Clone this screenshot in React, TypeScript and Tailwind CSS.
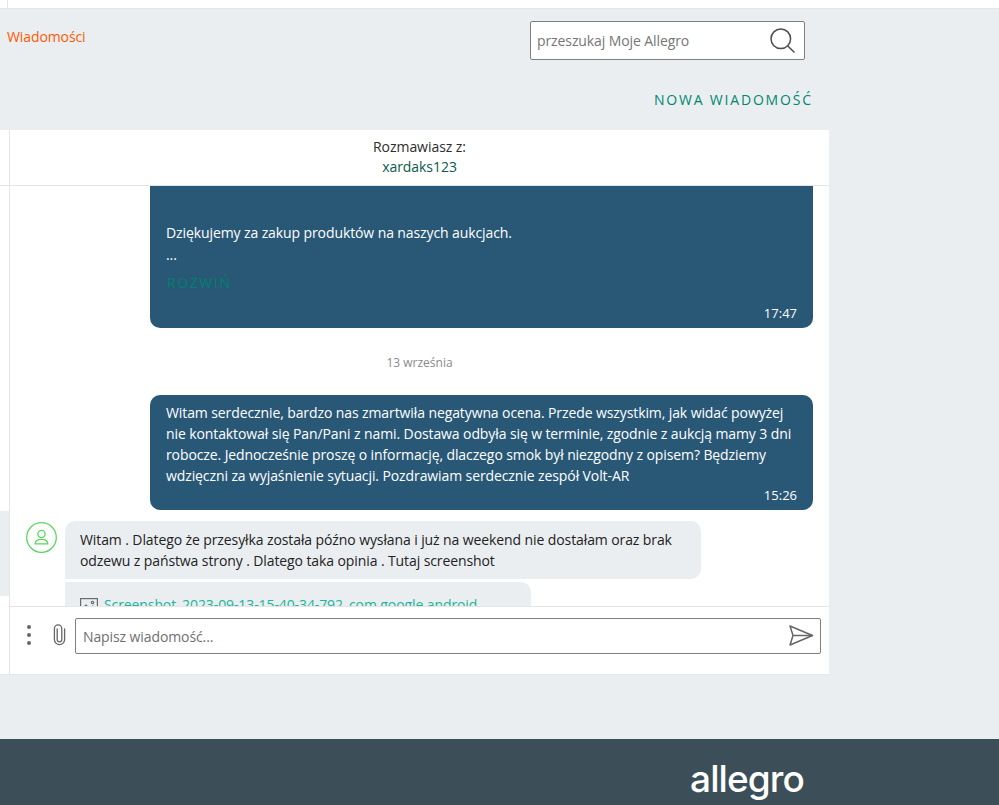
import React from "react";

const FONT = "font-['Open_Sans','Noto_Sans',sans-serif]";

function Bubble({ children, time, clipTop }: { children: React.ReactNode; time: string; clipTop?: boolean }) {
  return (
    <div className={`ml-[150px] mr-[16px] w-[663px] rounded-[10px] bg-[#295877] px-4 text-[14px] leading-[21px] tracking-[-0.1px] whitespace-nowrap text-white ${clipTop ? "-mt-[10px]" : ""}`}>
      {children}
      <div className="flex justify-end pb-[6px] text-[13px] leading-[18px] tracking-normal">{time}</div>
    </div>
  );
}

export default function App() {
  return (
    <div className={`${FONT} flex h-[805px] w-[999px] flex-col overflow-hidden bg-[#ebeef1] text-[#2d2d2d]`}>
      <div className="h-[9px] shrink-0 border-b border-[#e3e5e7] bg-white">
        <div className="h-[8px] w-[8px] border-r border-[#e6e6e6]" />
      </div>

      <div className="relative h-[121px] shrink-0">
        <div className="pl-[7px] pt-[18px] text-[14px] leading-[20px] tracking-[-0.1px] text-[#ff5a00]">Wiadomości</div>
        <div className="absolute left-[530px] top-[12px] flex h-[39px] w-[275px] items-center justify-between rounded-[2px] border border-[#7f7f7f] bg-white pl-[6px] pr-[9px] text-[14px] tracking-[-0.1px] text-[#767676]">
          <span>przeszukaj Moje Allegro</span>
          <svg width="25" height="25" viewBox="0 0 25 25" fill="none" stroke="#4d4d4d" strokeWidth="1.5">
            <circle cx="10.8" cy="10.8" r="9.8" />
            <path d="M17.8 18 L24.5 24.5" />
          </svg>
        </div>
        <div className="absolute left-[654px] top-[81px] text-[14px] leading-[20px] tracking-[1.8px] whitespace-nowrap text-[#00876f]">
          NOWA WIADOMOŚĆ
        </div>
      </div>

      <div className="flex h-[545px] w-[829px] shrink-0 border-b border-[#e4e6e8] bg-white">
        <div className="flex w-[10px] shrink-0 flex-col border-r border-[#e3e5e7]">
          <div className="h-[56px] border-b border-[#e3e5e7]" />
          <div className="h-[325px]" />
          <div className="h-[85px] bg-[#ebeef1]" />
        </div>
        <div className="flex min-w-0 flex-1 flex-col">
          <div className="flex h-[56px] shrink-0 flex-col items-center border-b border-[#e3e5e7] pt-[7px] text-[14px] leading-[20px] tracking-[-0.05px]">
            <span className="text-[#2d2d2d]">Rozmawiasz z:</span>
            <span className="text-[#0b5a4d]">xardaks123</span>
          </div>
          <div className="relative h-[420px] shrink-0 overflow-hidden">
            <div className="absolute inset-x-0 top-0 -ml-[10px] w-[829px]">
              <Bubble time="17:47" clipTop>
                <div className="pt-[46px]">Dziękujemy za zakup produktów na naszych aukcjach.</div>
                <div className="mt-[1px]">...</div>
                <div className="mt-[8px] h-[20px] pl-[1px] text-[14px] leading-[20px] tracking-[1.6px] text-[#00806c]">ROZWIŃ</div>
                <div className="h-[11px]" />
              </Bubble>
              <div className="flex h-[67px] items-center justify-center pl-[10px] pt-[2px] text-[12px] text-[#8a8a8a]">13 września</div>
              <Bubble time="15:26">
                <div className="pt-[7px]">
                  Witam serdecznie, bardzo nas zmartwiła negatywna ocena. Przede wszystkim, jak widać powyżej
                  <br />
                  nie kontaktował się Pan/Pani z nami. Dostawa odbyła się w terminie, zgodnie z aukcją mamy 3 dni
                  <br />
                  robocze. Jednocześnie proszę o informację, dlaczego smok był niezgodny z opisem? Będziemy
                  <br />
                  wdzięczni za wyjaśnienie sytuacji. Pozdrawiam serdecznie zespół Volt-AR
                </div>
              </Bubble>
              <div className="mt-[11px] flex pl-[26px]">
                <svg className="mt-[1px] shrink-0" width="31" height="31" viewBox="0 0 31 31" fill="none" stroke="#5bd65f" strokeWidth="1.3">
                  <circle cx="15.5" cy="15.5" r="14.8" />
                  <circle cx="15.5" cy="12" r="3.6" />
                  <path d="M9.2 21.8 c0.2-3 3-4.4 6.3-4.4 s6.1 1.4 6.3 4.4 Z" />
                </svg>
                <div className="ml-[8px] flex flex-col gap-[3px]">
                  <div className="h-[58px] w-[636px] rounded-[10px] rounded-bl-none bg-[#ebeef1] px-[15px] pt-[8px] text-[14px] leading-[21px] tracking-[-0.1px] whitespace-nowrap text-[#222]">
                    Witam . Dlatego że przesyłka została późno wysłana i już na weekend nie dostałam oraz brak
                    <br />
                    odzewu z państwa strony . Dlatego taka opinia . Tutaj screenshot
                  </div>
                  <div className="flex h-[60px] w-[466px] items-start gap-[6px] rounded-[10px] rounded-tl-none bg-[#ebeef1] px-[15px] pt-[12px] text-[14px] leading-[21px] tracking-[-0.1px] whitespace-nowrap text-[#19b59c]">
                    <svg className="mt-[4px] shrink-0" width="18" height="15" viewBox="0 0 18 15" fill="none" stroke="#6b6b6b" strokeWidth="1.2">
                      <rect x="0.6" y="0.6" width="16.8" height="13.8" />
                      <path d="M1 12 L6 7 L10 11 L13 8 L17 12" />
                      <circle cx="12.5" cy="4.5" r="1.2" />
                    </svg>
                    <span>Screenshot_2023-09-13-15-40-34-792_com.google.android</span>
                  </div>
                </div>
              </div>
            </div>
          </div>
          <div className="flex h-[68px] shrink-0 items-start border-t border-[#e3e5e7] pl-[15px] pr-[8px] pt-[11px]">
            <div className="mt-[7px] flex h-[20px] w-[8px] flex-col items-center justify-between">
              <span className="h-[4px] w-[4px] rounded-full bg-[#666]" />
              <span className="h-[4px] w-[4px] rounded-full bg-[#666]" />
              <span className="h-[4px] w-[4px] rounded-full bg-[#666]" />
            </div>
            <svg className="ml-[19px] mt-[6px] shrink-0" width="15" height="22" viewBox="0 0 15 22" fill="none" stroke="#666" strokeWidth="1.3" strokeLinecap="round">
              <path d="M5.2 5 V15.5 a2.3 2.3 0 0 0 4.6 0 V4.5 a3.7 3.7 0 0 0 -7.4 0 V15.5 a5.1 5.1 0 0 0 10.2 0 V5" />
            </svg>
            <div className="ml-[8px] flex h-[36px] w-[746px] shrink-0 items-center justify-between rounded-[2px] border border-[#7f7f7f] bg-white pl-[7px] pr-[6px] text-[14px] tracking-[-0.1px] text-[#6f6f6f]">
              <span>Napisz wiadomość...</span>
              <svg width="26" height="24" viewBox="0 0 26 24" fill="none" stroke="#666" strokeWidth="1.5" strokeLinejoin="round">
                <path d="M2 2 L24.5 11.5 L2 21 L5 11.5 Z" />
                <path d="M5 11.5 H24.5" />
              </svg>
            </div>
          </div>
        </div>
      </div>

      <div className="h-[64px] shrink-0" />
      <div className="flex h-[66px] shrink-0 justify-end bg-[#3c4e58] pr-[195px] pt-[18px]">
        <span className="font-['Inter',sans-serif] text-[37px] font-medium leading-[44px] tracking-[-0.9px] text-white">allegro</span>
      </div>
    </div>
  );
}
